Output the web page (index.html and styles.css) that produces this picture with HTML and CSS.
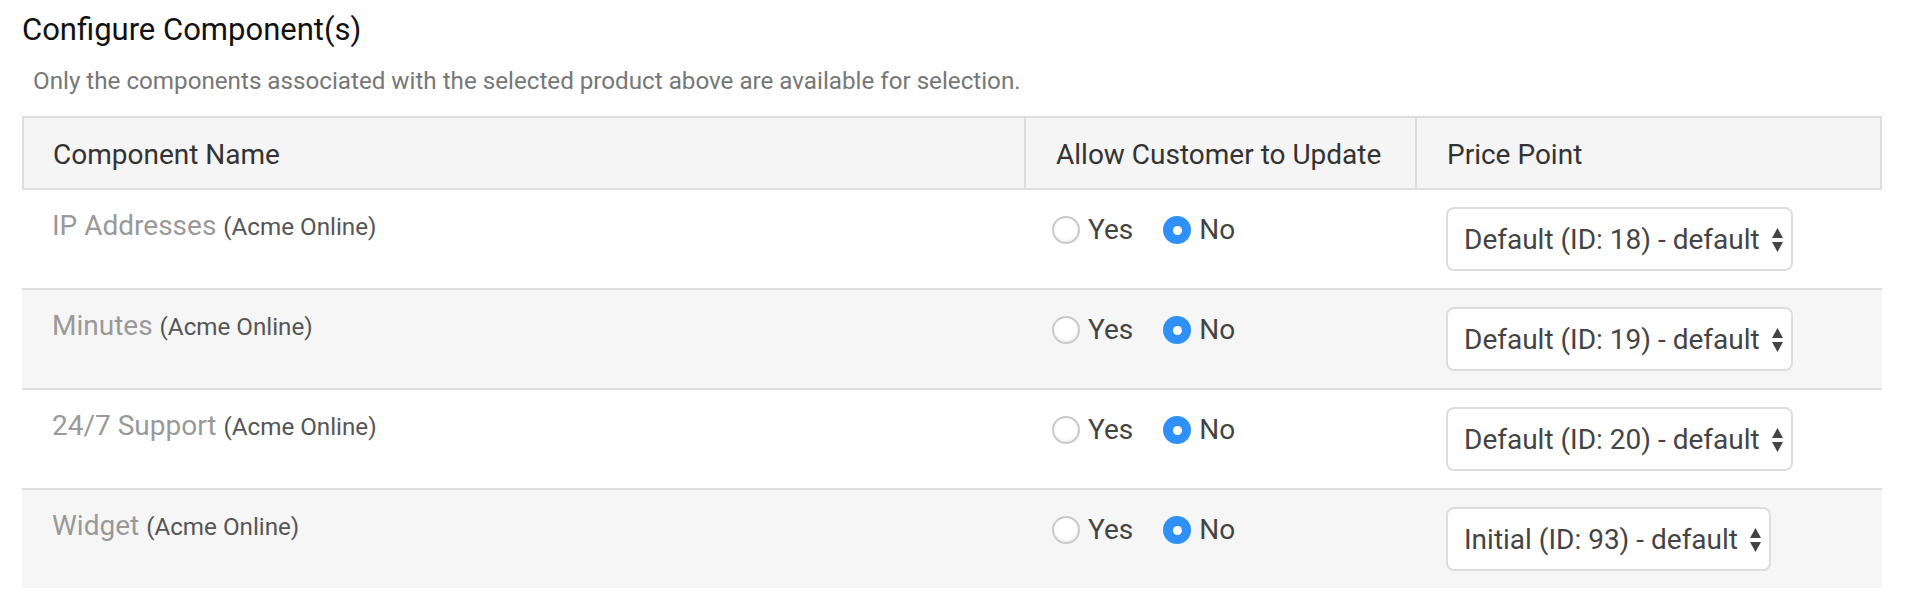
FILE: index.html
```html
<!DOCTYPE html>
<html lang="en">
<head>
<meta charset="utf-8">
<title>Configure Component(s)</title>
<link rel="stylesheet" href="styles.css">
</head>
<body>
<div class="page">
  <h2 class="title">Configure Component(s)</h2>
  <p class="hint">Only the components associated with the selected product above are available for selection.</p>
  <table class="components">
    <colgroup>
      <col class="c-name">
      <col class="c-allow">
      <col class="c-price">
    </colgroup>
    <thead>
      <tr>
        <th>Component Name</th>
        <th>Allow Customer to Update</th>
        <th>Price Point</th>
      </tr>
    </thead>
    <tbody>
      <tr>
        <td class="name"><span class="comp">IP Addresses</span> <span class="prod">(Acme Online)</span></td>
        <td class="allow">
          <label class="radio"><input type="radio" name="r1"><span>Yes</span></label>
          <label class="radio"><input type="radio" name="r1" checked><span>No</span></label>
        </td>
        <td class="price">
          <span class="select"><select><option>Default (ID: 18) - default</option></select><svg class="arrows" width="11" height="24" viewBox="0 0 11 24"><path d="M5.5 0L11 10H0z"/><path d="M0 14h11L5.5 24z"/></svg></span>
        </td>
      </tr>
      <tr>
        <td class="name"><span class="comp">Minutes</span> <span class="prod">(Acme Online)</span></td>
        <td class="allow">
          <label class="radio"><input type="radio" name="r2"><span>Yes</span></label>
          <label class="radio"><input type="radio" name="r2" checked><span>No</span></label>
        </td>
        <td class="price">
          <span class="select"><select><option>Default (ID: 19) - default</option></select><svg class="arrows" width="11" height="24" viewBox="0 0 11 24"><path d="M5.5 0L11 10H0z"/><path d="M0 14h11L5.5 24z"/></svg></span>
        </td>
      </tr>
      <tr>
        <td class="name"><span class="comp">24/7 Support</span> <span class="prod">(Acme Online)</span></td>
        <td class="allow">
          <label class="radio"><input type="radio" name="r3"><span>Yes</span></label>
          <label class="radio"><input type="radio" name="r3" checked><span>No</span></label>
        </td>
        <td class="price">
          <span class="select"><select><option>Default (ID: 20) - default</option></select><svg class="arrows" width="11" height="24" viewBox="0 0 11 24"><path d="M5.5 0L11 10H0z"/><path d="M0 14h11L5.5 24z"/></svg></span>
        </td>
      </tr>
      <tr>
        <td class="name"><span class="comp">Widget</span> <span class="prod">(Acme Online)</span></td>
        <td class="allow">
          <label class="radio"><input type="radio" name="r4"><span>Yes</span></label>
          <label class="radio"><input type="radio" name="r4" checked><span>No</span></label>
        </td>
        <td class="price">
          <span class="select"><select><option>Initial (ID: 93) - default</option></select><svg class="arrows" width="11" height="24" viewBox="0 0 11 24"><path d="M5.5 0L11 10H0z"/><path d="M0 14h11L5.5 24z"/></svg></span>
        </td>
      </tr>
    </tbody>
  </table>
</div>
</body>
</html>
```
FILE: styles.css
```css
* { box-sizing: border-box; }

html, body {
  margin: 0;
  padding: 0;
  background: #fff;
}

body {
  font-family: Roboto, "Liberation Sans", Arial, sans-serif;
  color: #333;
}

.page {
  padding: 13px 24px 0 22px;
}

.title {
  margin: 0;
  font-size: 31px;
  line-height: 34px;
  font-weight: 400;
  color: #111;
}

.hint {
  margin: 19px 0 20px 11px;
  font-size: 24.2px;
  line-height: 30px;
  color: #777;
}

.components {
  width: 100%;
  table-layout: fixed;
  border-collapse: separate;
  border-spacing: 0;
}

.c-allow { width: 391px; }
.c-price { width: 465px; }

.components th {
  background: #f5f5f5;
  border-top: 2px solid #ddd;
  border-bottom: 2px solid #ddd;
  border-right: 2px solid #ddd;
  padding: 21px 30px 17px;
  font-size: 28px;
  line-height: 32px;
  font-weight: 400;
  color: #333;
  text-align: left;
  white-space: nowrap;
}

.components th:first-child {
  border-left: 2px solid #ddd;
  padding-left: 29px;
}

.components td {
  vertical-align: top;
  padding: 0;
}

.components tbody tr:nth-child(even) td {
  background: #f6f6f6;
}

.components tbody tr + tr td {
  border-top: 2px solid #ddd;
}

.components td.name {
  padding: 20px 30px 46px 30px;
  font-size: 28px;
  line-height: 32px;
  white-space: nowrap;
}

.comp {
  color: #999;
}

.prod {
  font-size: 24.2px;
  line-height: 24px;
  color: #555;
}

.components td.allow {
  padding: 24px 0 0 26px;
  white-space: nowrap;
}

.radio {
  display: inline-flex;
  align-items: center;
  gap: 8px;
  margin-right: 26px;
  font-size: 28px;
  line-height: 32px;
  color: #444;
}

.radio input {
  appearance: none;
  -webkit-appearance: none;
  margin: 0;
  width: 28px;
  height: 28px;
  border-radius: 50%;
  border: 2px solid #c9c9c9;
  background: #fff;
  box-shadow: inset 0 -2px 2px rgba(0, 0, 0, 0.06);
  position: relative;
}

.radio input:checked {
  border-color: #2f91f7;
  background: #2f91f7;
  box-shadow: none;
}

.radio input:checked::after {
  content: "";
  position: absolute;
  left: 50%;
  top: 50%;
  width: 9px;
  height: 9px;
  margin: -4.5px 0 0 -4.5px;
  border-radius: 50%;
  background: #fff;
}

.components td.price {
  padding: 17px 0 0 29px;
}

.select {
  position: relative;
  display: inline-block;
}

.select select {
  appearance: none;
  -webkit-appearance: none;
  height: 64px;
  margin: 0;
  padding: 0 31px 0 16px;
  border: 2px solid #ddd;
  border-radius: 8px;
  background: #fff;
  font-family: Roboto, "Liberation Sans", Arial, sans-serif;
  font-size: 28px;
  color: #444;
}

.select .arrows {
  position: absolute;
  right: 10px;
  top: 21px;
  fill: #444;
  pointer-events: none;
}
```
